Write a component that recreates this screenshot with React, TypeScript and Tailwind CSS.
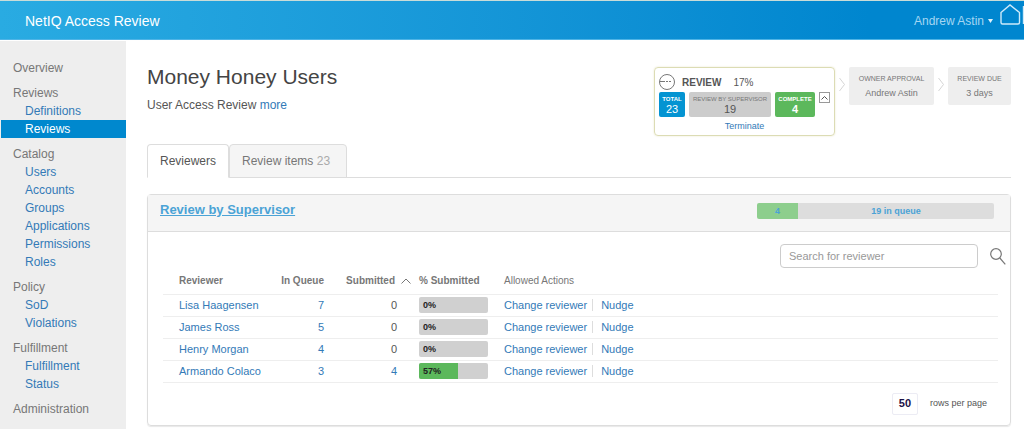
import { useState } from 'react';

const menu = [
  { title: 'Overview', items: [] },
  { title: 'Reviews', items: ['Definitions', 'Reviews'] },
  { title: 'Catalog', items: ['Users', 'Accounts', 'Groups', 'Applications', 'Permissions', 'Roles'] },
  { title: 'Policy', items: ['SoD', 'Violations'] },
  { title: 'Fulfillment', items: ['Fulfillment', 'Status'] },
  { title: 'Administration', items: [] },
];

const reviewers = [
  { name: 'Lisa Haagensen', queue: 7, submitted: 0 },
  { name: 'James Ross', queue: 5, submitted: 0 },
  { name: 'Henry Morgan', queue: 4, submitted: 0 },
  { name: 'Armando Colaco', queue: 3, submitted: 4 },
];

function Header() {
  return (
    <header className="flex h-10 items-center justify-between border-t border-[#c9dcd8] bg-linear-to-r from-[#29abe2] to-[#0086cf] to-85% pl-[25px] shadow-[inset_0_-1px_0_#4fb4e6]">
      <div className="text-sm text-white">NetIQ Access Review</div>
      <div className="flex h-full items-center">
        <button className="flex items-center gap-1 text-xs text-[#a5d6f2]">
          Andrew Astin
          <svg width="5" height="4" viewBox="0 0 5 4" fill="#e0f2fc">
            <path d="M0 0h5L2.5 4z" />
          </svg>
        </button>
        <a href="#" aria-label="Home" className="ml-1.5 self-start pt-[3px]">
          <svg width="25" height="22" viewBox="0 0 25 22" fill="none" stroke="#cdeafa" strokeWidth="1.4">
            <path d="M2 8.5 11 1 20.500 8.500V18.500q0 1.500-1.500 1.500H3.500q-1.500 0-1.500-1.500z" />
            <path d="M24.500 2v18" />
          </svg>
        </a>
      </div>
    </header>
  );
}

function Sidebar() {
  return (
    <nav className="mt-px flex w-[126px] shrink-0 flex-col gap-[7px] bg-[#eeeeee] pt-[18px] text-xs/[18px]">
      {menu.map((section) => (
        <div key={section.title}>
          <div className="pl-[13px] text-[#777777]">{section.title}</div>
          {section.items.map((item) => (
            <a
              key={item}
              href="#"
              className={
                section.title === 'Reviews' && item === 'Reviews'
                  ? 'ml-px block bg-[#0088ce] pl-6 text-white'
                  : 'ml-px block pl-6 text-[#337ab7]'
              }
            >
              {item}
            </a>
          ))}
        </div>
      ))}
    </nav>
  );
}

function StepArrow() {
  return (
    <svg className="mx-1 mt-[10px]" width="6" height="15" viewBox="0 0 6 15" fill="none" stroke="#d5d5d5">
      <path d="M.5 1 5.500 7.500.5 14" />
    </svg>
  );
}

function Steps() {
  return (
    <div className="flex items-start">
      <section className="w-[181px] rounded-sm border border-[#dcdcb4] px-1 pt-1 pb-[3px] shadow-[0_0_2px_#e8e4c8]">
        <div className="flex h-5 items-center text-[10px] text-[#555555]">
          <svg width="16" height="16" viewBox="0 0 16 16" fill="none" stroke="#777777">
            <circle cx="8" cy="8" r="7.5" />
            <path d="M1 7.5h5M7 7.5h2M10 7.5h2" />
          </svg>
          <h2 className="ml-[7px] font-bold">REVIEW</h2>
          <span className="ml-3">17%</span>
        </div>
        <div className="flex items-start gap-1 text-center text-[6px]/[8px]">
          <div className="h-[25px] w-[26px] rounded-xs bg-[#0494d2] pt-[3px] font-bold text-white">
            TOTAL
            <div className="text-[11px]/[12px] font-normal">23</div>
          </div>
          <div className="h-[25px] w-[82px] rounded-xs bg-[#cccccc] pt-[3px] text-[#777777]">
            REVIEW BY SUPERVISOR
            <div className="text-[11px]/[12px] text-[#555555]">19</div>
          </div>
          <div className="h-[25px] w-10 rounded-xs bg-[#5cb85c] pt-[3px] font-bold text-white">
            COMPLETE
            <div className="text-[11px]/[12px]">4</div>
          </div>
          <button aria-label="Collapse" className="flex size-[11px] items-center justify-center border border-[#999999]">
            <svg width="7" height="4" viewBox="0 0 7 4" fill="none" stroke="#555555">
              <path d="M.5 3.5l3-3 3 3" />
            </svg>
          </button>
        </div>
        <a href="#" className="mt-[3px] block text-center text-[9px]/[12px] text-[#337ab7]">
          Terminate
        </a>
      </section>
      <StepArrow />
      <div className="flex h-[38px] w-[85px] flex-col justify-center rounded-xs bg-[#eeeeee] text-center text-[#777777]">
        <div className="text-[7px]/[14px]">OWNER APPROVAL</div>
        <div className="text-[9px]/[14px]">Andrew Astin</div>
      </div>
      <StepArrow />
      <div className="flex h-[38px] w-[63px] flex-col justify-center rounded-xs bg-[#eeeeee] text-center text-[#777777]">
        <div className="text-[7px]/[14px]">REVIEW DUE</div>
        <div className="text-[9px]/[14px]">3 days</div>
      </div>
    </div>
  );
}

function ReviewerTable() {
  return (
    <table className="w-full table-fixed text-[11px]">
      <colgroup>
        <col className="w-[101px]" />
        <col className="w-[60px]" />
        <col className="w-[91px]" />
        <col className="w-[85px]" />
        <col />
      </colgroup>
      <thead>
        <tr className="h-[26px] border-b border-[#eeeeee] text-[10px] text-[#777777]">
          <th className="pl-4 text-left">Reviewer</th>
          <th className="text-right">In Queue</th>
          <th>
            <button className="flex w-full items-center justify-end gap-[6px] pr-1">
              Submitted
              <svg width="10" height="6" viewBox="0 0 10 6" fill="none" stroke="#777777">
                <path d="M.5 5.5 5 1l4.5 4.5" />
              </svg>
            </button>
          </th>
          <th className="pl-1 text-left">% Submitted</th>
          <th className="pl-1 text-left font-normal">Allowed Actions</th>
        </tr>
      </thead>
      <tbody>
        {reviewers.map((r) => {
          const percent = Math.round((r.submitted / (r.submitted + r.queue)) * 100);
          return (
            <tr key={r.name} className="h-[22px] border-b border-[#eeeeee] text-[#337ab7]">
              <td className="pl-4"><a href="#">{r.name}</a></td>
              <td className="text-right"><a href="#">{r.queue}</a></td>
              <td className="pr-[18px] text-right">
                {r.submitted > 0 ? <a href="#">{r.submitted}</a> : <span className="text-[#555555]">0</span>}
              </td>
              <td className="pl-1">
                <div className="grid h-4 w-[69px] overflow-hidden rounded-xs bg-[#d0d0d0]">
                  <div className="col-start-1 row-start-1 bg-[#5cb85c]" style={{ width: `${percent}%` }} />
                  <div className="col-start-1 row-start-1 pl-1 text-[9px]/[16px] font-bold text-[#222222]">{percent}%</div>
                </div>
              </td>
              <td className="pl-1">
                <a href="#" className="border-r border-[#dddddd] pr-[5px]">Change reviewer</a>
                <a href="#" className="pl-2">Nudge</a>
              </td>
            </tr>
          );
        })}
      </tbody>
    </table>
  );
}

export default function App() {
  const [tab, setTab] = useState('reviewers');
  const active = 'h-[34px] border border-[#dddddd] border-b-white bg-white px-3 rounded-t-sm text-[#555555]';
  const inactive = 'h-[34px] border border-[#dddddd] bg-[#f5f5f5] pl-3 pr-4 rounded-t-sm text-[#777777]';
  return (
    <div className="flex min-h-screen flex-col bg-white font-['Liberation_Sans',Arial,sans-serif]">
      <Header />
      <div className="flex flex-1">
        <Sidebar />
        <main className="min-w-0 flex-1 pt-[27px] pr-[13px] pb-[3px] pl-[21px]">
          <div className="flex h-[77px] items-start justify-between">
            <div>
              <h1 className="text-[21px]/[20px] text-[#444444]">Money Honey Users</h1>
              <p className="mt-[9px] text-xs/[18px] text-[#555555]">
                User Access Review <a href="#" className="text-[#337ab7]">more</a>
              </p>
            </div>
            <Steps />
          </div>

          <div className="flex h-[34px] text-xs shadow-[inset_0_-1px_0_#dddddd]">
            <button className={tab === 'reviewers' ? active : inactive} onClick={() => setTab('reviewers')}>
              Reviewers
            </button>
            <button className={tab === 'items' ? active : inactive} onClick={() => setTab('items')}>
              Review items <span className="text-[#aaaaaa]">23</span>
            </button>
          </div>

          <section className="mt-4 rounded-sm border border-[#dddddd] shadow-[0_1px_1px_#e8e8e8]">
            <div className="flex h-[37px] items-start justify-between border-b border-[#dddddd] bg-[#f5f5f5] pr-4 pl-3">
              <a href="#" className="pt-[5px] text-[13px]/[20px] font-bold text-[#4ba3d6] underline">
                Review by Supervisor
              </a>
              <div className="mt-2 flex h-4 w-[237px] overflow-hidden rounded-xs text-center text-[9px]/[16px] font-bold text-[#4ba3d6]">
                <div className="bg-[#8dce8d]" style={{ width: `${(4 / 23) * 100}%` }}>4</div>
                <div className="flex-1 bg-[#dddddd]">19 in queue</div>
              </div>
            </div>
            <div className="pt-3 pr-1 pl-[15px]">
              <form className="flex items-center justify-end gap-3" onSubmit={(e) => e.preventDefault()}>
                <input
                  type="text"
                  aria-label="Search for reviewer"
                  placeholder="Search for reviewer"
                  className="h-6 w-[198px] rounded-sm border border-[#cccccc] px-2 text-[11px] text-[#555555] placeholder:text-[#999999]"
                />
                <button aria-label="Search">
                  <svg width="16" height="17" viewBox="0 0 16 17" fill="none" stroke="#777777" strokeWidth="1.2">
                    <circle cx="6" cy="6" r="5.3" />
                    <path d="M9.8 10 15.3 16.3" />
                  </svg>
                </button>
              </form>
              <div className="pr-2">
                <ReviewerTable />
              </div>
              <div className="flex h-[42px] items-center justify-end gap-3 pr-[19px] text-[9px] text-[#555555]">
                <select
                  id="rows"
                  className="h-[22px] w-[26px] appearance-none rounded-xs border border-[#ececf4] text-center text-[11px] font-bold text-[#1c1045]"
                >
                  <option>50</option>
                </select>
                <label htmlFor="rows">rows per page</label>
              </div>
            </div>
          </section>
        </main>
      </div>
    </div>
  );
}
